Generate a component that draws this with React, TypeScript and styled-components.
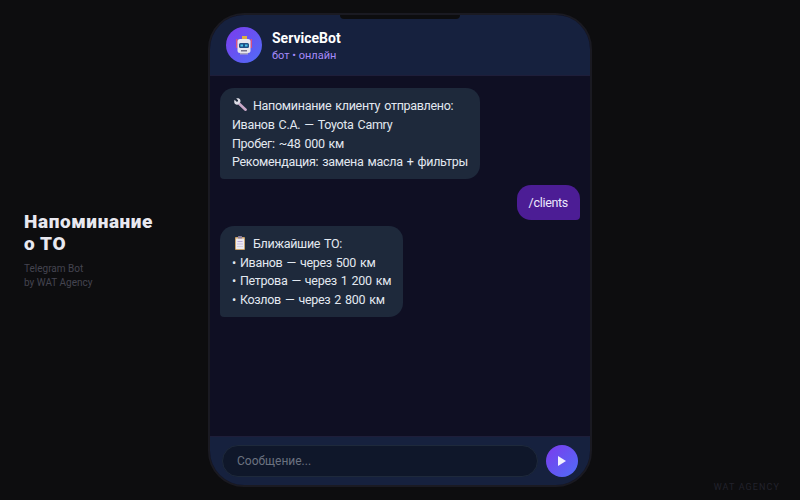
import styled, { createGlobalStyle } from 'styled-components';

const GlobalStyle = createGlobalStyle`
  html, body {
    margin: 0;
    padding: 0;
    background: #0d0d0f;
  }
`;

const Page = styled.div`
  width: 800px;
  height: 500px;
  display: grid;
  grid-template-columns: 1fr 384px 1fr;
  overflow: hidden;
  font-family: Roboto, 'Noto Sans', sans-serif;
`;

const Caption = styled.div`
  align-self: center;
  padding: 1px 0 0 24px;
`;

const Title = styled.div`
  font-size: 19px;
  font-weight: 900;
  line-height: 22px;
  letter-spacing: 0.6px;
  color: #e8e8f0;
`;

const Subtitle = styled.div`
  margin-top: 7px;
  font-size: 10px;
  line-height: 14px;
  color: #44444f;
`;

const Phone = styled.div`
  align-self: center;
  height: 470px;
  border: 2px solid #1a1a22;
  border-radius: 36px;
  background: #0f0f23;
  position: relative;
  overflow: hidden;
  display: flex;
  flex-direction: column;
`;

const Notch = styled.div`
  position: absolute;
  top: 0;
  left: 50%;
  transform: translateX(-50%);
  width: 120px;
  height: 4px;
  background: #0d0d0f;
  border-radius: 0 0 4px 4px;
`;

const Header = styled.div`
  height: 60px;
  background: #16213e;
  border-bottom: 1px solid #1e1e3a;
  display: flex;
  align-items: center;
  gap: 10px;
  padding: 0 16px;
`;

const Avatar = styled.div`
  width: 36px;
  height: 36px;
  border-radius: 50%;
  background: linear-gradient(135deg, #7c3aed, #4f6ef7);
  display: flex;
  align-items: center;
  justify-content: center;
`;

const BotInfo = styled.div`
  padding-top: 2px;
`;

const BotName = styled.div`
  font-size: 14px;
  font-weight: 700;
  color: #ffffff;
  line-height: 18px;
`;

const BotStatus = styled.div`
  margin-top: 2px;
  font-size: 11px;
  color: #a78bfa;
  line-height: 14px;
`;

const Messages = styled.div`
  flex: 1;
  padding: 12px 10px;
  display: flex;
  flex-direction: column;
  gap: 6px;
`;

const Bubble = styled.div<{ $out?: boolean }>`
  align-self: ${(p) => (p.$out ? 'flex-end' : 'flex-start')};
  background: ${(p) => (p.$out ? '#4c1d95' : '#1e293b')};
  color: ${(p) => (p.$out ? '#ede9fe' : '#e2e8f0')};
  border-radius: ${(p) => (p.$out ? '14px 14px 4px 14px' : '14px 14px 14px 4px')};
  padding: 9px 12px 7px;
  font-size: 12.5px;
  line-height: 1.5;
  letter-spacing: -0.3px;
  word-spacing: 1.2px;
  white-space: pre-line;
`;

const Glyph = styled.svg`
  width: 14px;
  height: 14px;
  margin: 0 6px 0 1px;
  vertical-align: -2px;
`;

const InputBar = styled.div`
  background: #16213e;
  border-top: 1px solid #1e1e3a;
  display: flex;
  align-items: center;
  gap: 8px;
  padding: 8px 12px;
`;

const MessageField = styled.div`
  flex: 1;
  height: 32px;
  box-sizing: border-box;
  border: 1px solid #1e293b;
  border-radius: 16px;
  background: #0f172a;
  color: #6b7280;
  font-size: 12px;
  line-height: 31px;
  padding: 0 14px;
`;

const SendButton = styled.div`
  width: 32px;
  height: 32px;
  border-radius: 50%;
  background: linear-gradient(135deg, #7c3aed, #4f6ef7);
  display: flex;
  align-items: center;
  justify-content: center;
`;

const Watermark = styled.div`
  align-self: end;
  justify-self: end;
  margin: 0 20px 8px 0;
  font-size: 9px;
  letter-spacing: 1.1px;
  color: #22222c;
`;

function RobotIcon() {
  return (
    <svg width="16" height="20" viewBox="0 0 16 20">
      <rect x="6" y="1" width="5" height="3" fill="#e0b040" />
      <rect x="0" y="4" width="1.5" height="9" fill="#d8527e" />
      <rect x="14.5" y="4" width="1.5" height="9" fill="#d8527e" />
      <rect x="1.5" y="4" width="13" height="14" rx="2.5" fill="#e8e6ee" />
      <rect x="3" y="8" width="10" height="5" rx="1.5" fill="#1f4f86" />
      <rect x="4.5" y="9.5" width="2.5" height="2" fill="#4fc3e8" />
      <rect x="9" y="9.5" width="2.5" height="2" fill="#4fc3e8" />
      <rect x="5" y="15" width="6" height="1.5" fill="#77748c" />
      <rect x="4" y="18" width="8" height="1.5" fill="#a9a6bc" />
    </svg>
  );
}

function WrenchIcon() {
  return (
    <Glyph viewBox="0 0 14 14">
      <path d="M6 5.5l6.6 6.2" stroke="#c9a8c8" strokeWidth="2.6" strokeLinecap="round" />
      <path
        d="M1.6 1.8l2 2 1.2-.3.3-1.2-1.9-1.9c1.6-.6 3.2-.1 3.9 1.1.5.9.5 1.9.1 2.7L5 6.4c-.9.4-2 .3-2.8-.3C1.1 5.2.9 3.3 1.6 1.8z"
        fill="#dcdce6"
      />
    </Glyph>
  );
}

function ClipboardIcon() {
  return (
    <Glyph viewBox="0 0 14 14">
      <rect x="2" y="1" width="10" height="13" rx="1" fill="#c9a26a" />
      <rect x="3" y="2.5" width="8" height="10.5" fill="#eeeaf0" />
      <rect x="5" y="0" width="4" height="2.5" rx="0.5" fill="#8d7f9c" />
      <rect x="4.5" y="5" width="5" height="1" fill="#b9a8d8" />
      <rect x="4" y="7.5" width="6" height="1" fill="#c9bce0" />
      <rect x="4" y="10" width="6" height="1" fill="#d0cfe0" />
    </Glyph>
  );
}

export default function App() {
  return (
    <Page>
      <GlobalStyle />
      <Caption>
        <Title>
          Напоминание
          <br />о ТО
        </Title>
        <Subtitle>
          Telegram Bot
          <br />
          by WAT Agency
        </Subtitle>
      </Caption>
      <Phone>
        <Notch />
        <Header>
          <Avatar>
            <RobotIcon />
          </Avatar>
          <BotInfo>
            <BotName>ServiceBot</BotName>
            <BotStatus>бот • онлайн</BotStatus>
          </BotInfo>
        </Header>
        <Messages>
          <Bubble>
            <WrenchIcon />
            {`Напоминание клиенту отправлено:
Иванов С.А. — Toyota Camry
Пробег: ~48 000 км
Рекомендация: замена масла + фильтры`}
          </Bubble>
          <Bubble $out>/clients</Bubble>
          <Bubble>
            <ClipboardIcon />
            {`Ближайшие ТО:
• Иванов — через 500 км
• Петрова — через 1 200 км
• Козлов — через 2 800 км`}
          </Bubble>
        </Messages>
        <InputBar>
          <MessageField>Сообщение...</MessageField>
          <SendButton>
            <svg width="10" height="12" viewBox="0 0 10 12">
              <path d="M1 1l8 5-8 5z" fill="#f1f0ff" />
            </svg>
          </SendButton>
        </InputBar>
      </Phone>
      <Watermark>WAT AGENCY</Watermark>
    </Page>
  );
}
